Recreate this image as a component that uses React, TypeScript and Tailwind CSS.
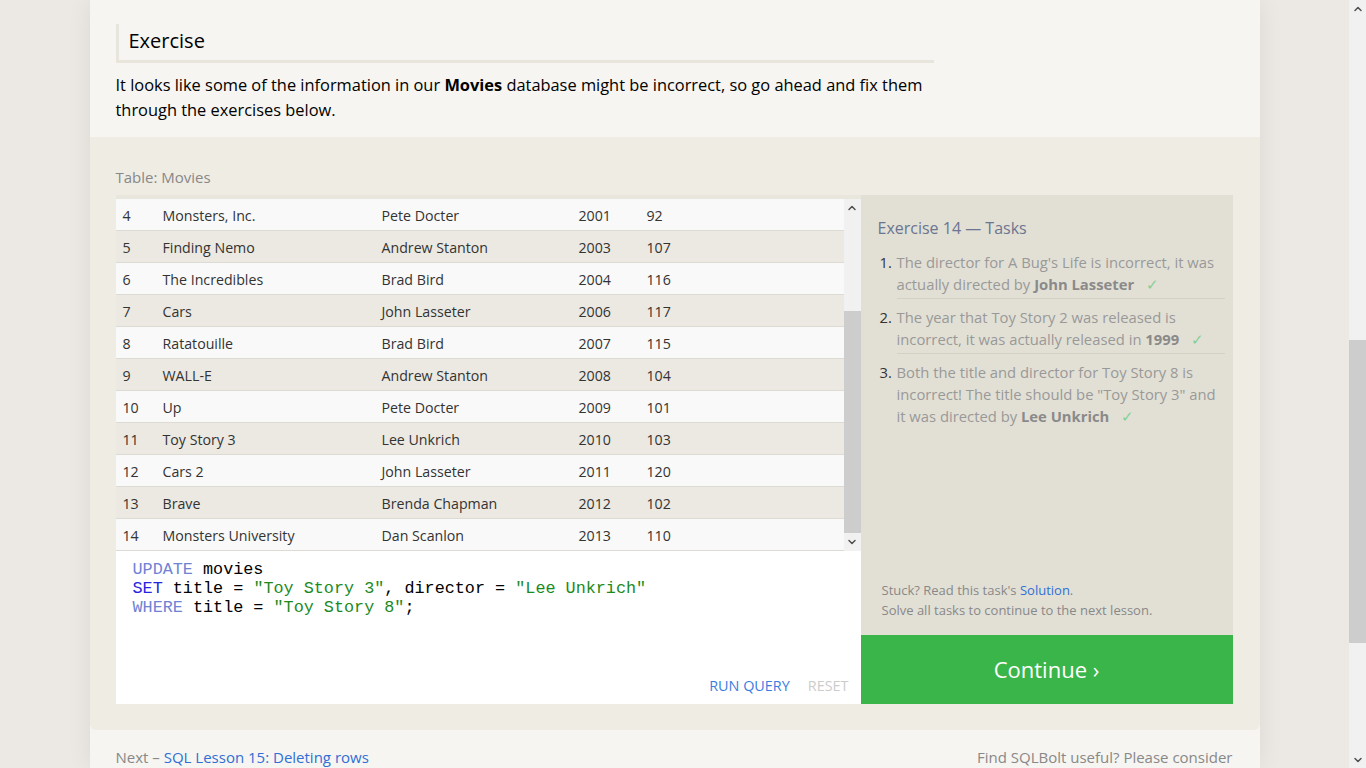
import { ChevronUp, ChevronDown } from "lucide-react";

const movies = [
  [4, "Monsters, Inc.", "Pete Docter", 2001, 92],
  [5, "Finding Nemo", "Andrew Stanton", 2003, 107],
  [6, "The Incredibles", "Brad Bird", 2004, 116],
  [7, "Cars", "John Lasseter", 2006, 117],
  [8, "Ratatouille", "Brad Bird", 2007, 115],
  [9, "WALL-E", "Andrew Stanton", 2008, 104],
  [10, "Up", "Pete Docter", 2009, 101],
  [11, "Toy Story 3", "Lee Unkrich", 2010, 103],
  [12, "Cars 2", "John Lasseter", 2011, 120],
  [13, "Brave", "Brenda Chapman", 2012, 102],
  [14, "Monsters University", "Dan Scanlon", 2013, 110],
];

function Check() {
  return <span className="ml-3 text-[#86cf95]">✓</span>;
}

export default function App() {
  return (
    <div className="flex h-screen overflow-hidden bg-[#ece8e4] font-['Open_Sans',sans-serif]">
      <div className="flex-1">
        <div className="mx-auto h-full w-[1170px] bg-[#f6f5f1] shadow-[0_0_24px_rgba(0,0,0,0.07)]">
          {/* exercise intro */}
          <section className="px-[26px] pt-6 pb-[15px]">
            <h2 className="w-[818px] border-b-[3px] border-l-[3px] border-[#e7e5dc] pl-[10px] pb-[3px] text-[20px] leading-[33px] text-black">
              Exercise
            </h2>
            <p className="mt-[9px] w-[840px] text-[16.4px] leading-[25px] text-black">
              It looks like some of the information in our <b>Movies</b> database might be incorrect, so go
              ahead and fix them through the exercises below.
            </p>
          </section>

          {/* widget */}
          <section className="rounded-b-md bg-[#efece4] px-[26px] pt-[30px] pb-[26px]">
            <div className="text-[15px] leading-5 text-[#888]">Table: Movies</div>
            <div className="mt-[8px] flex">
              <div className="w-[745px]">
                <div className="flex h-[356px] border-t-4 border-[#e9e6de]">
                  <div className="flex-1 text-[14.2px] text-[#333]">
                    {movies.map((m, i) => (
                      <div
                        key={m[0]}
                        className={
                          "flex h-8 items-center border-b border-[#dddbd4] pt-[2px] " +
                          (i % 2 === 0 ? "bg-[#f9f9f9]" : "bg-[#ebe9e2]")
                        }
                      >
                        <span className="w-[47px] pl-[7px]">{m[0]}</span>
                        <span className="w-[219px]">{m[1]}</span>
                        <span className="w-[197px]">{m[2]}</span>
                        <span className="w-[68px]">{m[3]}</span>
                        <span>{m[4]}</span>
                      </div>
                    ))}
                  </div>
                  <div className="flex w-[17px] flex-col bg-[#f1f1f1]">
                    <div className="flex h-[17px] items-center justify-center">
                      <ChevronUp size={12} strokeWidth={3} className="text-[#505050]" />
                    </div>
                    <div className="mt-[95px] h-[222px] bg-[#cdcdcd]" />
                    <div className="flex h-[17px] items-center justify-center">
                      <ChevronDown size={12} strokeWidth={3} className="text-[#505050]" />
                    </div>
                  </div>
                </div>
                <div className="flex h-[153px] flex-col bg-white pl-[17px] pr-3 pt-[9px] pb-2">
                  <pre className="flex-1 font-['Liberation_Mono',monospace] text-[16.8px] leading-[19px] text-black">
                    <span className="text-[#6f82d4]">UPDATE</span> movies{"\n"}
                    <span className="text-[#2525e0]">SET</span> title ={" "}
                    <span className="text-[#1d8a1d]">"Toy Story 3"</span>, director ={" "}
                    <span className="text-[#1d8a1d]">"Lee Unkrich"</span>{"\n"}
                    <span className="text-[#6f82d4]">WHERE</span> title ={" "}
                    <span className="text-[#1d8a1d]">"Toy Story 8"</span>;
                  </pre>
                  <div className="flex justify-end gap-[18px] text-[14.4px] leading-5">
                    <span className="text-[#3a7de0]">RUN QUERY</span>
                    <span className="text-[#cccccc]">RESET</span>
                  </div>
                </div>
              </div>

              <div className="flex w-[372px] flex-col">
                <div className="flex flex-1 flex-col bg-[#e2e0d5] pl-[17px] pr-2 pt-[21px] pb-[15px]">
                  <div className="text-[16px] leading-6 text-[#6b7591]">Exercise 14 — Tasks</div>
                  <ol className="mt-[11px] text-[14.8px] leading-[22px] text-[#999]">
                    <li className="flex pb-[4px]">
                      <span className="w-[19px] pl-[2px] text-[#333]">1.</span>
                      <div className="flex-1 border-b border-[#d3d1c6] pb-[3px]">
                        The director for A Bug's Life is incorrect, it was actually directed by{" "}
                        <b className="text-[#8a8a8a]">John Lasseter</b>
                        <Check />
                      </div>
                    </li>
                    <li className="flex pt-[3px] pb-[4px]">
                      <span className="w-[19px] pl-[2px] text-[#333]">2.</span>
                      <div className="flex-1 border-b border-[#d3d1c6] pb-[3px]">
                        The year that Toy Story 2 was released is incorrect, it was actually released in{" "}
                        <b className="text-[#8a8a8a]">1999</b>
                        <Check />
                      </div>
                    </li>
                    <li className="flex pt-[3px]">
                      <span className="w-[19px] pl-[2px] text-[#333]">3.</span>
                      <div className="flex-1">
                        Both the title and director for Toy Story 8 is incorrect! The title should be "Toy
                        Story 3" and it was directed by <b className="text-[#8a8a8a]">Lee Unkrich</b>
                        <Check />
                      </div>
                    </li>
                  </ol>
                  <div className="mt-auto pl-1 text-[13px] leading-5 text-[#888]">
                    <div>
                      Stuck? Read this task's <span className="text-[#2f6fd6]">Solution</span>.
                    </div>
                    <div>Solve all tasks to continue to the next lesson.</div>
                  </div>
                </div>
                <div className="flex h-[69px] items-center justify-center bg-[#3ab54a] text-[22px] text-white">
                  Continue ›
                </div>
              </div>
            </div>
          </section>

          {/* footer */}
          <div className="flex justify-between px-[26px] pt-[17px] text-[15px] leading-5 text-[#888]">
            <span>
              Next – <span className="text-[#2f6fd6]">SQL Lesson 15: Deleting rows</span>
            </span>
            <span className="pr-[1px]">Find SQLBolt useful? Please consider</span>
          </div>
        </div>
      </div>

      {/* page scrollbar */}
      <div className="flex w-[17px] flex-col bg-[#f1f1f1]">
        <div className="flex h-[17px] items-center justify-center">
          <ChevronUp size={12} strokeWidth={3} className="text-[#505050]" />
        </div>
        <div className="mt-[323px] h-[303px] bg-[#cdcdcd]" />
        <div className="mt-auto flex h-[17px] items-center justify-center">
          <ChevronDown size={12} strokeWidth={3} className="text-[#505050]" />
        </div>
      </div>
    </div>
  );
}
